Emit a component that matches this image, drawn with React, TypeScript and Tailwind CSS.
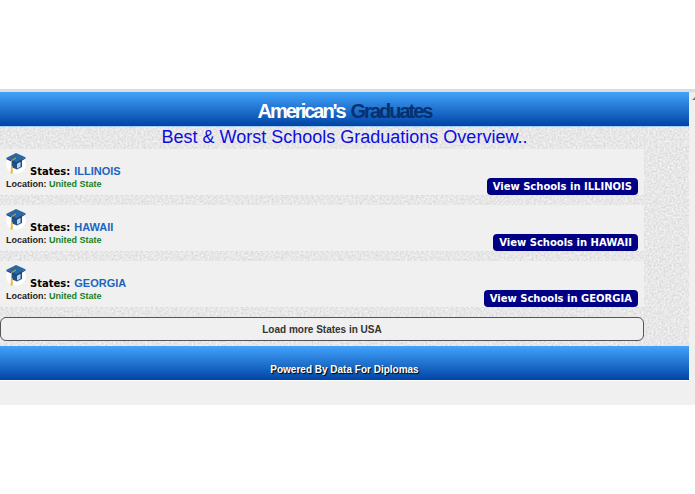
import React from "react";

const states = ["ILLINOIS", "HAWAII", "GEORGIA"];

function PaperTexture() {
  return (
    <svg className="absolute inset-0 h-full w-full" aria-hidden="true">
      <filter id="paper" x="0" y="0" width="100%" height="100%" colorInterpolationFilters="sRGB">
        <feTurbulence type="fractalNoise" baseFrequency="0.5" numOctaves="2" seed="4" />
        <feColorMatrix
          type="matrix"
          values="0.2 0 0 0 0.805  0.2 0 0 0 0.805  0.2 0 0 0 0.805  0 0 0 0 1"
        />
      </filter>
      <rect width="100%" height="100%" fill="#e6e6e6" />
      <rect width="100%" height="100%" filter="url(#paper)" />
    </svg>
  );
}

function GraduationIcon() {
  return (
    <svg viewBox="0 0 20 21" className="h-[21px] w-5 shrink-0" aria-hidden="true">
      <circle cx="10" cy="11" r="10" fill="#fff" />
      <path d="M5 7v7l6 2.500 5-2.500V7z" fill="#1d5288" />
      <path d="M11 10.500l3.500-1.800v5L11 15.500z" fill="#b9d2e8" />
      <path d="M0.500 4.800 10 0l9.500 4.300-9 5.700z" fill="#2b68a2" />
      <path d="M0.500 4.800 10.500 9.500l9-5.200v1.300l-9 5.400-10-4.800z" fill="#17467a" />
      <path d="M10 5 5.500 7.500v7" fill="none" stroke="#dfa93a" strokeWidth="1" />
      <path d="M5 13h1.500l.5 7.500H4.500z" fill="#e9b949" />
    </svg>
  );
}

function StateRow({ name }: { name: string }) {
  return (
    <li className="flex h-[47px] items-end justify-between border-b border-dashed border-[#dcdcdc] bg-[#f0f0f0] px-1.5">
      <div className="h-full pt-1">
        <div className="flex gap-1">
          <GraduationIcon />
          <h3 className="flex items-baseline gap-1 pt-3 text-[11px] leading-3 font-bold">
            <span className="font-['Comic_Sans_MS','DejaVu_Sans',sans-serif] text-[10px] text-black">
              States:
            </span>
            <a href="#" className="text-[#1d64c0]">{name}</a>
          </h3>
        </div>
        <p className="text-[9px] leading-3 font-bold text-[#222]">
          Location: <span className="text-[#1a801a]">United State</span>
        </p>
      </div>
      <button
        type="button"
        className="h-[17px] rounded bg-[#000084] px-1.5 font-['Verdana','DejaVu_Sans',sans-serif] text-[10px] leading-4 font-bold text-white"
      >
        View Schools in {name}
      </button>
    </li>
  );
}

export default function App() {
  return (
    <div className="min-h-screen bg-white pt-[89px] font-['Liberation_Sans',Arial,sans-serif]">
      <div className="border-t-3 border-[#dcdcdc] bg-[#f0f0f0]">
        <div className="flex">
          <div className="min-w-0 flex-1">
            <header className="flex h-[35px] items-center justify-center border-b border-[#a9cdf2] bg-linear-to-b from-[#42a3fb] to-[#0244a5] pt-1">
              <h1 className="flex gap-1.5 text-xl leading-6 font-bold tracking-[-2px] text-white">
                <span>American's</span>
                <span className="text-[#06316f]">Graduates</span>
              </h1>
            </header>
            <main className="relative pb-[5px]">
              <PaperTexture />
              <div className="relative">
                <h2 className="h-[22px] text-center text-lg leading-5 text-[#0d0de0]">
                  Best &amp; Worst Schools Graduations Overview..
                </h2>
                <div className="mr-[45px]">
                  <ul className="flex flex-col gap-[9px]">
                    {states.map((name) => (
                      <StateRow key={name} name={name} />
                    ))}
                  </ul>
                  <button
                    type="button"
                    className="mt-[9px] h-6 w-full rounded-md border border-[#555] bg-[#f0f0f0] text-[10px] font-bold text-[#333]"
                  >
                    Load more States in USA
                  </button>
                </div>
              </div>
            </main>
            <footer className="flex h-[35px] items-end justify-center border-b border-white bg-linear-to-b from-[#42a3fb] to-[#0244a5] pb-1">
              <p className="text-[10px] leading-3 font-bold text-white text-shadow-[1px_1px_1px_#000]">
                Powered By Data For Diplomas
              </p>
            </footer>
          </div>
          <div className="w-1.5 pt-1">
            <svg viewBox="0 0 6 6" className="h-1.5 w-1.5" aria-hidden="true">
              <path d="M3 4 6 1v3z" fill="#777" />
            </svg>
          </div>
        </div>
        <div className="h-6" />
      </div>
    </div>
  );
}
